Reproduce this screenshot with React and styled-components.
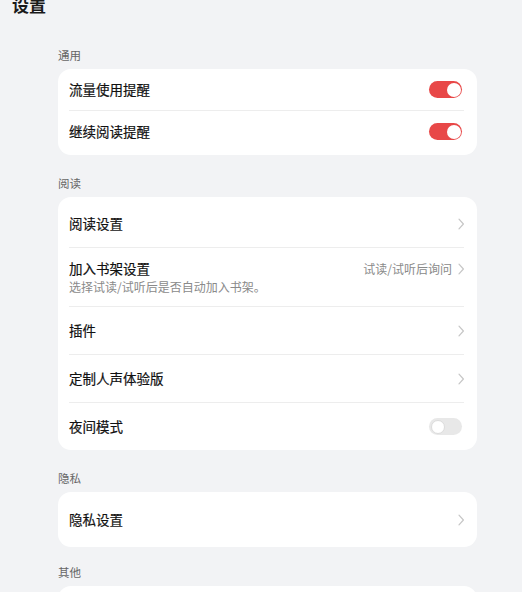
import React from "react";
import styled, { createGlobalStyle } from "styled-components";

const Global = createGlobalStyle`
  html, body {
    margin: 0;
    padding: 0;
    background: #f2f3f5;
    overflow: hidden;
  }
  body {
    font-family: "Noto Sans CJK SC", "Noto Sans", sans-serif;
    color: #1c1c1c;
  }
`;

const Page = styled.div`
  width: 522px;
  height: 592px;
  overflow: hidden;
  background: #f2f3f5;
`;

const Title = styled.h1`
  margin: -6px 0 0 12px;
  font-size: 17px;
  line-height: 22px;
  font-weight: 700;
  color: #1a1a1a;
`;

const Content = styled.div`
  display: flex;
  flex-direction: column;
  gap: 20px;
  padding: 31px 45px 0 58px;
`;

const Section = styled.section`
  display: flex;
  flex-direction: column;
  margin-top: ${(p) => p.$shift || 0}px;
`;

const SectionLabel = styled.div`
  font-size: 11.5px;
  line-height: 16px;
  color: #666;
  margin-bottom: 6px;
`;

const Card = styled.div`
  background: #fff;
  border-radius: 13px;
  padding: ${(p) => p.$pad || "0"};
  min-height: ${(p) => p.$minH || "0"};
  display: flex;
  flex-direction: column;
`;

const Row = styled.div`
  display: flex;
  align-items: center;
  justify-content: space-between;
  height: ${(p) => p.$h}px;
  padding: 0 12px 0 11px;
  box-sizing: border-box;
`;

const Divider = styled.div`
  height: 1px;
  background: #ededed;
  margin: 0 13px 0 11px;
`;

const RowTitle = styled.span`
  font-size: 13.5px;
  line-height: 19px;
  font-weight: 400;
  color: #111;
  -webkit-text-stroke: 0.2px #111;
`;

const Stack = styled.div`
  flex: 1;
  display: flex;
  flex-direction: column;
`;

const TitleLine = styled.div`
  display: flex;
  align-items: center;
  justify-content: space-between;
`;

const Subtitle = styled.span`
  font-size: 12px;
  line-height: 17px;
  color: #8a8a8a;
`;

const Trailing = styled.div`
  display: flex;
  align-items: center;
  gap: 5px;
`;

const Value = styled.span`
  font-size: 12px;
  line-height: 17px;
  color: #8a8a8a;
`;

const Toggle = styled.div`
  width: 33px;
  height: 17px;
  border-radius: 9px;
  margin-right: 3px;
  background: ${(p) => (p.$on ? "#e84848" : "#e8e8e8")};
  display: flex;
  align-items: center;
  justify-content: ${(p) => (p.$on ? "flex-end" : "flex-start")};
  padding: 0 1.5px;
  box-sizing: border-box;
`;

const Knob = styled.div`
  width: 14px;
  height: 14px;
  border-radius: 50%;
  background: #fff;
  box-sizing: border-box;
  border: ${(p) => (p.$on ? "none" : "1px solid #dcdcdc")};
`;

const Chevron = () => (
  <svg width="8" height="12" viewBox="0 0 8 12" fill="none">
    <path d="M2 1.2 L6.4 6 L2 10.8" stroke="#c6c6c6" strokeWidth="1.2" strokeLinecap="round" strokeLinejoin="round" />
  </svg>
);

const Switch = ({ on }) => (
  <Toggle $on={on}>
    <Knob $on={on} />
  </Toggle>
);

export default function App() {
  return (
    <Page>
      <Global />
      <Title>设置</Title>
      <Content>
        <Section>
          <SectionLabel>通用</SectionLabel>
          <Card $pad="0 0 3px">
            <Row $h={41}>
              <RowTitle>流量使用提醒</RowTitle>
              <Switch on />
            </Row>
            <Divider />
            <Row $h={41}>
              <RowTitle>继续阅读提醒</RowTitle>
              <Switch on />
            </Row>
          </Card>
        </Section>

        <Section>
          <SectionLabel>阅读</SectionLabel>
          <Card $pad="3px 0 0">
            <Row $h={47}>
              <RowTitle>阅读设置</RowTitle>
              <Chevron />
            </Row>
            <Divider />
            <Row $h={58}>
              <Stack>
                <TitleLine>
                  <RowTitle>加入书架设置</RowTitle>
                  <Trailing>
                    <Value>试读/试听后询问</Value>
                    <Chevron />
                  </Trailing>
                </TitleLine>
                <Subtitle>选择试读/试听后是否自动加入书架。</Subtitle>
              </Stack>
            </Row>
            <Divider />
            <Row $h={47}>
              <RowTitle>插件</RowTitle>
              <Chevron />
            </Row>
            <Divider />
            <Row $h={47}>
              <RowTitle>定制人声体验版</RowTitle>
              <Chevron />
            </Row>
            <Divider />
            <Row $h={47}>
              <RowTitle>夜间模式</RowTitle>
              <Switch on={false} />
            </Row>
          </Card>
        </Section>

        <Section>
          <SectionLabel>隐私</SectionLabel>
          <Card>
            <Row $h={55}>
              <RowTitle>隐私设置</RowTitle>
              <Chevron />
            </Row>
          </Card>
        </Section>

        <Section $shift={-3}>
          <SectionLabel>其他</SectionLabel>
          <Card $minH="56px" />
        </Section>
      </Content>
    </Page>
  );
}
